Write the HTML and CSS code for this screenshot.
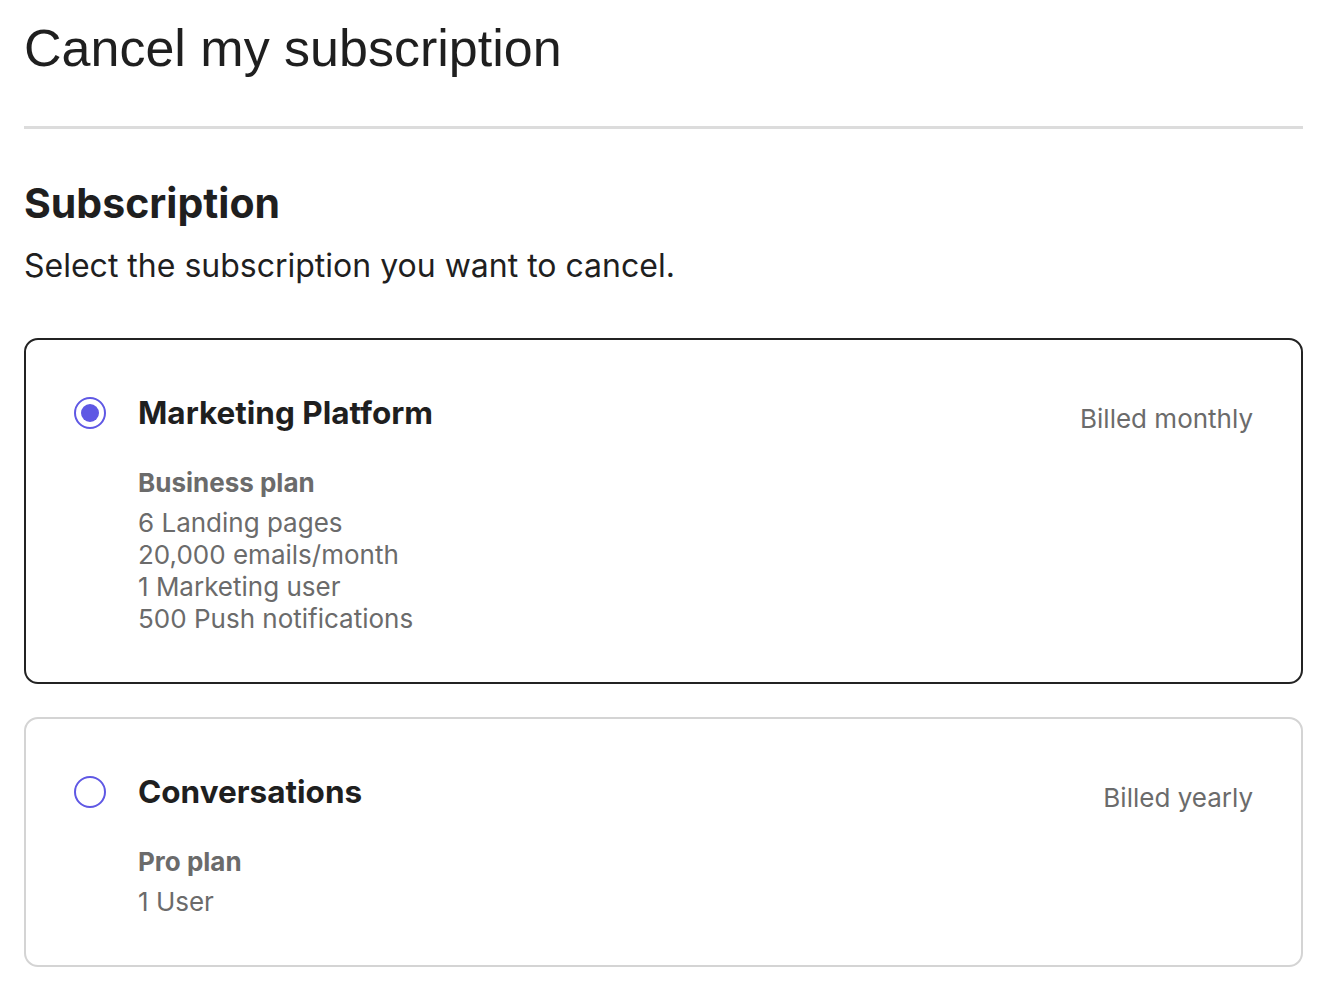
FILE: index.html
```html
<!DOCTYPE html>
<html lang="en">
<head>
  <meta charset="UTF-8">
  <meta name="viewport" content="width=device-width, initial-scale=1.0">
  <title>Cancel my subscription</title>
  <link rel="stylesheet" href="styles.css">
</head>
<body>
  <div class="page">
    <h1 class="page-title">Cancel my subscription</h1>
    <hr class="divider">

    <h2 class="section-title">Subscription</h2>
    <p class="section-desc">Select the subscription you want to cancel.</p>

    <div class="plans">
      <label class="plan selected">
        <input type="radio" name="plan" checked>
        <span class="radio"></span>
        <div class="plan-body">
          <div class="plan-head">
            <span class="plan-name">Marketing Platform</span>
            <span class="billing">Billed monthly</span>
          </div>
          <div class="plan-tier">Business plan</div>
          <ul class="features">
            <li>6 Landing pages</li>
            <li>20,000 emails/month</li>
            <li>1 Marketing user</li>
            <li>500 Push notifications</li>
          </ul>
        </div>
      </label>

      <label class="plan">
        <input type="radio" name="plan">
        <span class="radio"></span>
        <div class="plan-body">
          <div class="plan-head">
            <span class="plan-name">Conversations</span>
            <span class="billing">Billed yearly</span>
          </div>
          <div class="plan-tier">Pro plan</div>
          <ul class="features">
            <li>1 User</li>
          </ul>
        </div>
      </label>
    </div>
  </div>
</body>
</html>
```

FILE: styles.css
```css
* {
  margin: 0;
  padding: 0;
  box-sizing: border-box;
}

body {
  font-family: Inter, 'Liberation Sans', sans-serif;
  background-color: #fff;
  color: #1f1f1f;
}

.page {
  padding: 18px 27px 0 24px;
}

.page-title {
  font-family: 'Liberation Sans', Arial, sans-serif;
  font-weight: 400;
  font-size: 52px;
  line-height: 60px;
  color: #1f1f1f;
}

.divider {
  border: none;
  height: 3px;
  background-color: #dcdcdc;
  margin-top: 48px;
}

.section-title {
  font-size: 41px;
  font-weight: 700;
  line-height: 48px;
  margin-top: 50px;
  color: #1f1f1f;
}

.section-desc {
  font-size: 32px;
  line-height: 40px;
  margin-top: 19px;
  color: #1f1f1f;
}

.plans {
  display: flex;
  flex-direction: column;
  gap: 33px;
  margin-top: 52px;
}

.plan {
  display: flex;
  align-items: flex-start;
  gap: 32px;
  padding: 53px 48px 47px 48px;
  border: 2px solid #d4d4d4;
  border-radius: 14px;
  cursor: pointer;
}

.plan.selected {
  border-color: #232323;
}

.plan input {
  display: none;
}

.radio {
  flex-shrink: 0;
  width: 32px;
  height: 32px;
  margin-top: 4px;
  border: 2px solid #5f58e4;
  border-radius: 50%;
  display: flex;
  align-items: center;
  justify-content: center;
}

.plan input:checked + .radio::after {
  content: '';
  width: 18px;
  height: 18px;
  border-radius: 50%;
  background-color: #5f58e4;
}

.plan-body {
  flex: 1;
}

.plan-head {
  display: flex;
  justify-content: space-between;
  align-items: baseline;
}

.plan-name {
  font-size: 31.5px;
  font-weight: 700;
  line-height: 40px;
  color: #1f1f1f;
}

.billing {
  font-size: 26px;
  color: #6b6b6b;
  position: relative;
  top: 4px;
}

.plan-tier {
  font-size: 26px;
  font-weight: 700;
  line-height: 32px;
  margin-top: 34px;
  color: #6b6b6b;
}

.features {
  list-style: none;
  margin-top: 8px;
}

.features li {
  font-size: 26px;
  line-height: 32px;
  color: #6b6b6b;
}
```
